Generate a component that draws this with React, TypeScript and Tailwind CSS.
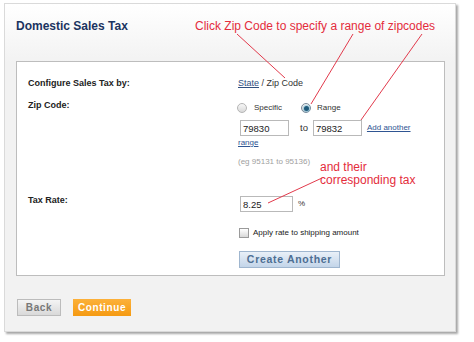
import React from "react";

function Radio({ checked }: { checked?: boolean }) {
  return checked ? (
    <span className="inline-flex items-center justify-center w-[10px] h-[10px] rounded-full border border-[#7a8a99] bg-[linear-gradient(#f4f4f4,#c8c8c8)]">
      <span className="w-[5px] h-[5px] rounded-full bg-[#1f5a7a] shadow-[0_0_1px_1px_rgba(120,190,220,0.6)]" />
    </span>
  ) : (
    <span className="inline-block w-[10px] h-[10px] rounded-full border border-[#b5b5b5] bg-[linear-gradient(#f7f7f7,#d9d9d9)]" />
  );
}

export default function App() {
  return (
    <div className="relative w-[474px] h-[342px] bg-white font-['Liberation_Sans',Arial,sans-serif] overflow-hidden">
      <div className="pl-[4px] pt-[3px]">
        <div className="w-[452px] h-[329px] border border-[#dadada] bg-[linear-gradient(to_bottom,#ffffff,#f2f2f2_18%)] shadow-[2px_2px_2px_rgba(0,0,0,0.35)]">
          <div className="pl-[11px] pt-[15px] text-[12px] leading-[14px] font-bold text-[#1b3461]">
            Domestic Sales Tax
          </div>
          <div className="ml-[11px] mt-[28px] w-[429px] h-[215px] border border-[#bdbdbd] bg-white">
            {/* Row 1 */}
            <div className="flex mt-[14px]">
              <div className="w-[220px] pl-[11px] text-[9px] leading-[14px] font-bold text-[#222]">
                Configure Sales Tax by:
              </div>
              <div className="text-[9px] leading-[14px] text-[#333] pl-[1px]">
                <span className="underline text-[#2f4f7f]">State</span> / Zip Code
              </div>
            </div>
            {/* Row 2 */}
            <div className="flex mt-[8px]">
              <div className="w-[220px] pl-[11px] text-[9px] leading-[14px] font-bold text-[#222]">
                Zip Code:
              </div>
              <div className="flex flex-col">
                <div className="flex items-center h-[12px] mt-[4px] text-[8px] text-[#333]">
                  <Radio />
                  <span className="ml-[7px]">Specific</span>
                  <span className="ml-[19px] flex items-center">
                    <Radio checked />
                  </span>
                  <span className="ml-[6px]">Range</span>
                </div>
                <div className="flex items-center mt-[6px] h-[16px]">
                  <input
                    readOnly
                    value="79830"
                    className="ml-[3px] w-[49px] h-[16px] border border-[#b9b9b9] px-[2px] text-[9.5px] text-[#222] outline-none"
                  />
                  <span className="ml-[11px] text-[9.5px] text-[#333]">to</span>
                  <input
                    readOnly
                    value="79832"
                    className="ml-[5px] w-[49px] h-[16px] border border-[#b9b9b9] px-[2px] text-[9.5px] text-[#222] outline-none"
                  />
                  <span className="ml-[5px] text-[8px] underline text-[#2f5592]">Add another</span>
                </div>
                <div className="mt-[1px] h-[12px] leading-[12px] text-[8px] underline text-[#2f5592] pl-[1px]">
                  range
                </div>
                <div className="mt-[7px] h-[11px] leading-[11px] text-[8px] text-[#a0a0a0] pl-[1px]">
                  (eg 95131 to 95136)
                </div>
              </div>
            </div>
            {/* Row 3 */}
            <div className="flex mt-[26px]">
              <div className="w-[220px] pl-[11px] text-[9px] leading-[14px] font-bold text-[#222]">
                Tax Rate:
              </div>
              <div className="flex flex-col">
                <div className="flex items-center mt-[3px] h-[16px]">
                  <input
                    readOnly
                    value="8.25"
                    className="ml-[3px] w-[53px] h-[16px] border border-[#b9b9b9] px-[2px] text-[9.5px] text-[#222] outline-none"
                  />
                  <span className="ml-[5px] text-[8px] text-[#333]">%</span>
                </div>
                <div className="flex items-center mt-[15px] h-[12px]">
                  <span className="ml-[2px] inline-block w-[10px] h-[10px] border border-[#9a9a9a] bg-[linear-gradient(#ffffff,#d8d8d8)]" />
                  <span className="ml-[4px] text-[8px] text-[#222]">Apply rate to shipping amount</span>
                </div>
                <div className="mt-[12px] ml-[2px] w-[101px] h-[17px] border border-[#9fb6cf] bg-[linear-gradient(#e9f0f8,#c3d5e9)] flex items-center justify-center text-[10.5px] font-bold tracking-[0.7px] text-[#4d6e93]">
                  Create Another
                </div>
              </div>
            </div>
          </div>
          <div className="flex mt-[23px] ml-[12px]">
            <div className="w-[44px] h-[17px] border border-[#bcbcbc] bg-[linear-gradient(#f4f4f4,#d9d9d9)] flex items-center justify-center text-[10px] font-bold tracking-[0.6px] text-[#777]">
              Back
            </div>
            <div className="ml-[12px] w-[58px] h-[17px] bg-[linear-gradient(#fcb13a,#f59a12)] flex items-center justify-center text-[10px] font-bold tracking-[0.6px] text-white">
              Continue
            </div>
          </div>
        </div>
      </div>

      {/* Annotations overlay */}
      <div className="absolute left-[195px] top-[19px] text-[12px] leading-[14px] text-[#e42c3c] whitespace-nowrap">
        Click Zip Code to specify a range of zipcodes
      </div>
      <div className="absolute left-[320px] top-[161px] text-[12px] leading-[13px] text-[#e42c3c] whitespace-nowrap">
        <div>and their</div>
        <div>corresponding tax</div>
      </div>
      <svg className="absolute left-0 top-0 pointer-events-none" width="474" height="342">
        <g stroke="#e23a4c" strokeWidth="1" fill="none">
          <line x1="237" y1="34" x2="285" y2="78" />
          <line x1="353" y1="34" x2="311" y2="104" />
          <line x1="422" y1="34" x2="361" y2="120" />
          <line x1="322" y1="178" x2="268" y2="203" />
        </g>
      </svg>
    </div>
  );
}
